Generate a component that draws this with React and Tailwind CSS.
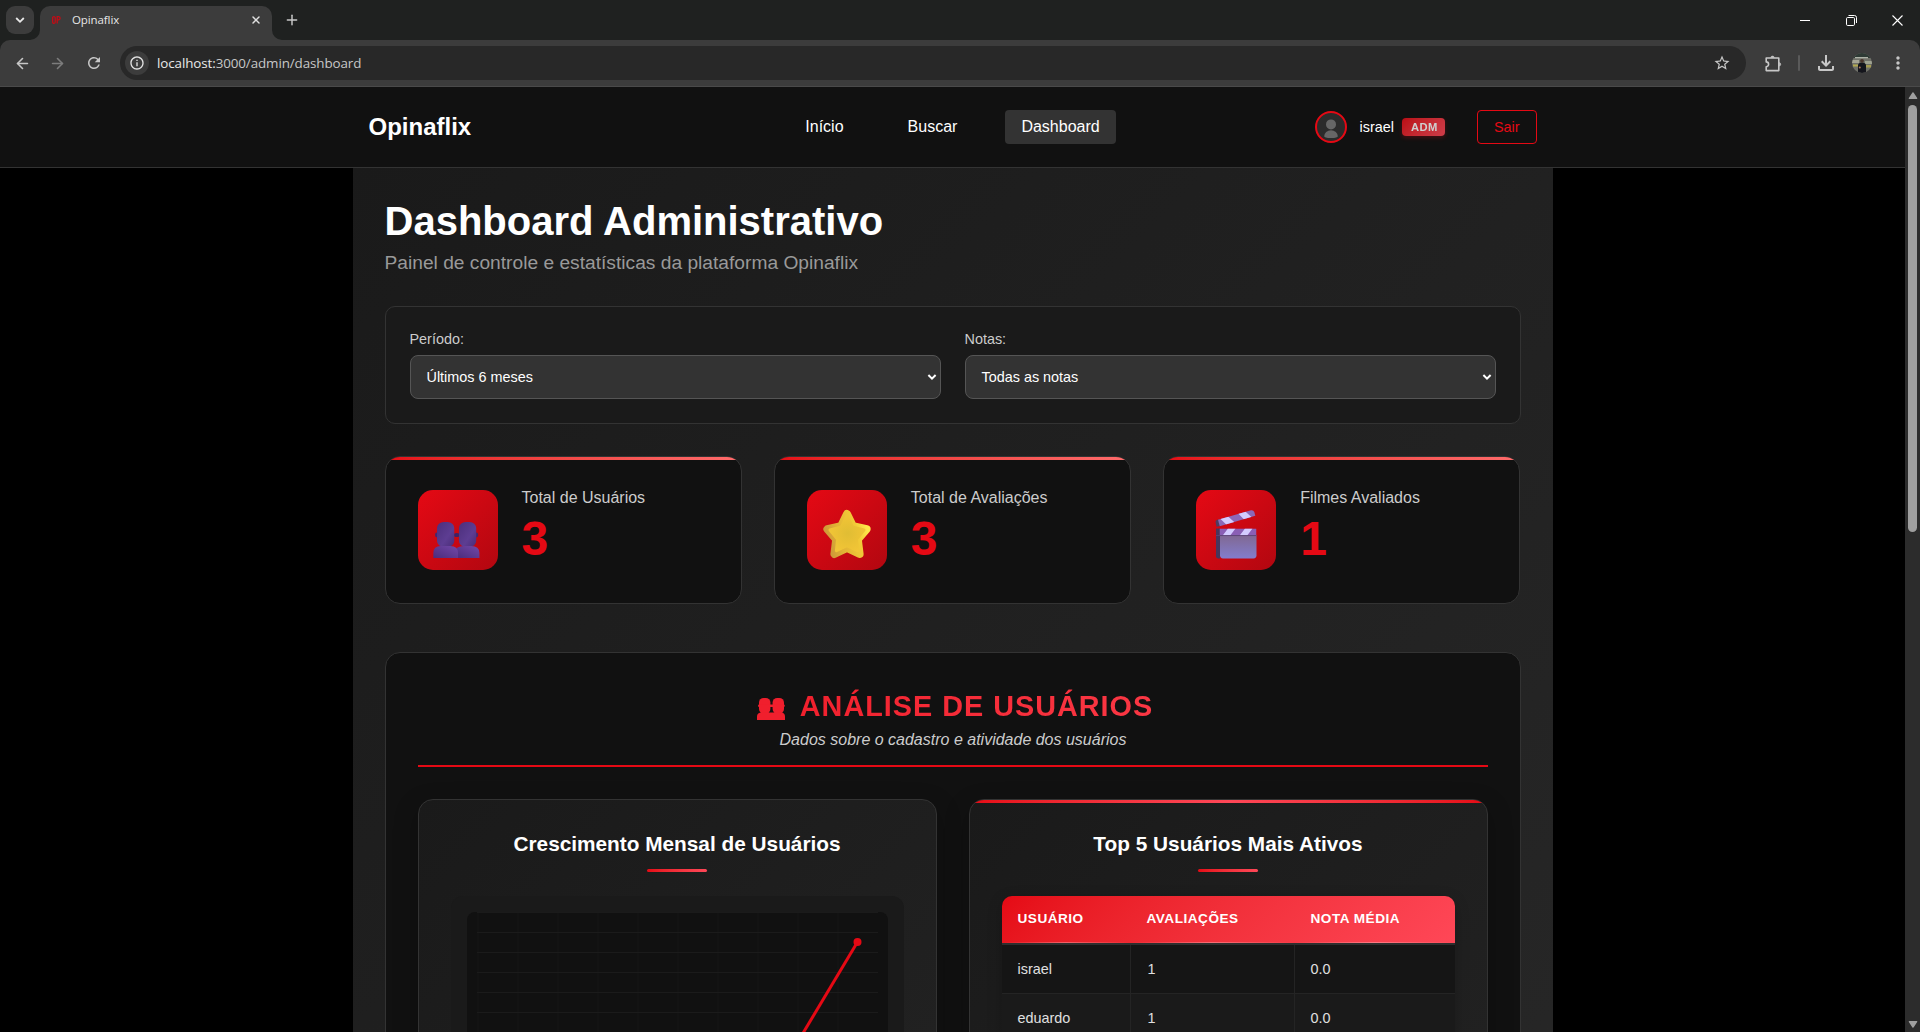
import React from "react";
import { ArrowLeft, ArrowRight, Plus, X } from "lucide-react";
import {
  MdRefresh,
  MdOutlineInfo,
  MdStarBorder,
  MdOutlineFileDownload,
  MdMoreVert,
} from "react-icons/md";

function BrowserTabs() {
  return (
    <div className="flex h-10 items-end bg-[#1f2120]">
      <div className="mb-1.5 ml-1.5 flex h-7 w-7 items-center justify-center rounded-[9px] bg-[#3c3c3c]">
        <svg width="10" height="10" viewBox="0 0 10 10" fill="none" stroke="#e8e8e8" strokeWidth="1.8">
          <path d="M1.2 3 L5 6.8 L8.8 3" />
        </svg>
      </div>
      <svg className="-ml-1" width="10" height="10" viewBox="0 0 10 10">
        <path d="M10 0 V10 H0 A10 10 0 0 0 10 0Z" fill="#3c3c3c" />
      </svg>
      <div className="flex h-[34px] w-[232px] items-center rounded-t-[10px] bg-[#3c3c3c] pb-1.5 pl-2.5">
        <svg width="12" height="12" viewBox="0 0 12 12" fill="none" stroke="#c20c16" strokeWidth="1.3">
          <rect x="2.6" y="2.6" width="2.6" height="6.8" rx="1.3" />
          <path d="M7.2 9.6 V2.6 H8.6 A1.5 1.6 0 0 1 8.6 5.8 H7.2" />
        </svg>
        <span className="ml-2.5 flex-1 font-['Open_Sans',sans-serif] text-[11.5px] leading-4 tracking-[-0.1px] text-[#e6e6e6]">
          Opinaflix
        </span>
        <X size={12} strokeWidth={2.9} color="#e0e0e0" className="mr-2.5" />
      </div>
      <svg width="10" height="10" viewBox="0 0 10 10">
        <path d="M0 0 V10 H10 A10 10 0 0 1 0 0Z" fill="#3c3c3c" />
      </svg>
      <Plus size={16} strokeWidth={2.2} color="#c8c8c8" className="mb-3 ml-[2px]" />
      <div className="flex-1" />
      <div className="flex h-10 items-center">
        <div className="flex w-[46px] justify-center">
          <div className="h-px w-2.5 bg-white" />
        </div>
        <div className="flex w-[46px] justify-center">
          <svg width="11" height="11" viewBox="0 0 11 11" fill="none" stroke="#fff" strokeWidth="1">
            <rect x="0.5" y="2.5" width="8" height="8" rx="1.2" />
            <path d="M2.5 0.5 H8.5 A2 2 0 0 1 10.5 2.5 V8" />
          </svg>
        </div>
        <div className="flex w-[46px] justify-center">
          <svg width="11" height="11" viewBox="0 0 11 11" fill="none" stroke="#fff" strokeWidth="1.1">
            <path d="M0.5 0.5 L10.5 10.5 M10.5 0.5 L0.5 10.5" />
          </svg>
        </div>
      </div>
    </div>
  );
}

function ProfilePhoto() {
  return (
    <svg width="20" height="20" viewBox="0 0 20 20">
      <defs>
        <clipPath id="photo">
          <circle cx="10" cy="10" r="10" />
        </clipPath>
      </defs>
      <g clipPath="url(#photo)">
        <rect width="20" height="20" fill="#6f7068" />
        <rect width="20" height="5" fill="#2e3a35" />
        <rect y="4" x="3" width="13" height="1.3" fill="#aeb3a8" />
        <rect y="7" width="7" height="3" fill="#a5a594" />
        <rect x="13" y="8" width="7" height="3" fill="#9fa291" />
        <rect x="1" y="11.5" width="5" height="2" fill="#b3a94f" />
        <rect x="14" y="12" width="5" height="2.5" fill="#a59b52" />
        <path d="M6 20 V12 Q6.5 9.5 10 9.5 T14 12 V20Z" fill="#14151c" />
        <circle cx="10" cy="7.8" r="1.9" fill="#4a352c" />
        <circle cx="7.8" cy="14.5" r="1" fill="#b07a5c" />
      </g>
    </svg>
  );
}

function BrowserToolbar() {
  return (
    <div className="bg-[#1f2120]">
      <div className="flex h-[47px] items-center rounded-t-[10px] border-b border-[#4a4a4a] bg-[#3c3c3c]">
        <ArrowLeft size={17} strokeWidth={2.3} color="#c7c7c7" className="ml-3.5" />
        <ArrowRight size={17} strokeWidth={2.3} color="#7c7c7c" className="ml-[18px]" />
        <MdRefresh size={18} color="#c7c7c7" className="ml-[19px]" />
        <div className="ml-[17px] flex h-[34px] w-[1626px] items-center rounded-full bg-[#282828] pl-[5px]">
          <div className="flex h-6 w-6 items-center justify-center rounded-full bg-[#3c3c3c]">
            <MdOutlineInfo size={16} color="#e3e3e3" />
          </div>
          <span className="ml-2 flex-1 font-['Open_Sans',sans-serif] text-[13.4px] leading-5 tracking-[-0.1px] text-[#c7c7c7]">
            <span className="text-[#e8e8e8]">localhost:</span>3000/admin/dashboard
          </span>
          <MdStarBorder size={18} color="#c7c7c7" className="mr-[15px]" />
        </div>
        <svg className="ml-[19px]" width="17" height="17" viewBox="0 0 17 17" fill="none" stroke="#c7c7c7" strokeWidth="1.6" strokeLinejoin="round">
          <path d="M1.2 3 H13.8 V15.6 H1.2 V11.7 A2.4 2.4 0 0 0 1.2 6.9Z" />
          <path d="M5.7 2.4 A1.9 1.9 0 0 1 9.3 2.4Z M14.4 7.5 A1.9 1.9 0 0 1 14.4 11.1Z" fill="#c7c7c7" strokeWidth="0.6" />
        </svg>
        <div className="ml-[16px] h-4 w-0.5 rounded bg-[#5a5a5a]" />
        <MdOutlineFileDownload size={24} color="#c7c7c7" className="ml-3.5" />
        <div className="ml-[14px]">
          <ProfilePhoto />
        </div>
        <MdMoreVert size={20} color="#c7c7c7" className="ml-[16px]" />
      </div>
    </div>
  );
}

function SiteHeader() {
  return (
    <header className="h-[81px] border-b border-[#333] bg-[#111]">
      <div className="mx-auto grid h-20 w-[1200px] grid-cols-[1fr_auto_1fr] items-center px-4">
        <div className="text-2xl leading-8 font-bold text-white">Opinaflix</div>
        <nav className="flex gap-8 text-base leading-[18px] text-white">
          <a className="px-4 py-2">Início</a>
          <a className="px-4 py-2">Buscar</a>
          <a className="rounded-[4px] bg-[#333] px-4 py-2">Dashboard</a>
        </nav>
        <div className="flex items-center justify-end">
          <svg width="32" height="32" viewBox="0 0 32 32">
            <circle cx="16" cy="16" r="15" fill="#2b2b2b" stroke="#e50914" strokeWidth="2" />
            <circle cx="16" cy="13.4" r="5" fill="#666" />
            <path d="M9.2 25.2 A6.8 6 0 0 1 22.8 25.2 Q22.8 27 16 27 T9.2 25.2Z" fill="#666" />
          </svg>
          <span className="ml-[13px] text-[14.4px] leading-4 text-white">israel</span>
          <span className="ml-2 flex h-[18px] w-[43px] items-center justify-center rounded-[4px] bg-linear-135 from-[#e50914] to-[#ff4757] pt-px pl-0.5 text-[11.2px] font-bold tracking-[0.5px] text-white opacity-80 shadow-[0_2px_4px_rgba(229,9,20,0.3)]">
            ADM
          </span>
          <button className="ml-8 rounded-[4px] border border-[#e50914] px-4 py-2 text-[14.4px] leading-4 text-[#e50914]">
            Sair
          </button>
        </div>
      </div>
    </header>
  );
}

function Filter({ label, value }) {
  return (
    <div className="flex flex-1 flex-col gap-2">
      <label className="text-[14.4px] leading-4 text-[#ccc]">{label}</label>
      <div className="flex h-11 items-center justify-between rounded-lg border border-[#555] bg-[#333] pr-[3px] pl-4 text-[14.4px] text-white">
        <span className="pt-px">{value}</span>
        <svg width="10" height="10" viewBox="0 0 10 10" fill="none" stroke="#fff" strokeWidth="2">
          <path d="M1.4 3 L5 6.6 L8.6 3" />
        </svg>
      </div>
    </div>
  );
}

function UsersIcon() {
  return (
    <svg className="mt-[3px] mr-[3px]" width="47" height="56" viewBox="0 0 42 56" preserveAspectRatio="none">
      <defs>
        <linearGradient id="headFill" x1="0" y1="0" x2="1" y2="1">
          <stop offset="0" stopColor="#4c2f7c" />
          <stop offset="0.6" stopColor="#5d3d92" />
          <stop offset="1" stopColor="#4a2c78" />
        </linearGradient>
        <linearGradient id="bodyFill" x1="0" y1="1" x2="1" y2="0">
          <stop offset="0" stopColor="#4b2c7c" />
          <stop offset="1" stopColor="#7248a8" />
        </linearGradient>
      </defs>
      <g>
        <ellipse cx="3.6" cy="31" rx="1.8" ry="2.4" fill="#44276e" />
        <ellipse cx="38.6" cy="31" rx="1.8" ry="2.4" fill="#44276e" />
        <ellipse cx="21.2" cy="31" rx="2.6" ry="2" fill="#3d2266" />
        <rect x="23.2" y="18" width="15.4" height="25" rx="6" fill="url(#headFill)" />
        <path d="M21 54 V44 Q24 42 28 42 H34 Q41.5 42 41.5 49 V54Z" fill="url(#bodyFill)" />
        <rect x="3.6" y="18" width="15.4" height="25" rx="6" fill="url(#headFill)" />
        <path d="M0.3 54 V49 Q0.3 42 7 42 H15.5 Q22.4 42 22.4 49 V54Z" fill="url(#bodyFill)" />
      </g>
    </svg>
  );
}

function StarIcon() {
  return (
    <svg className="mt-[3px]" width="50" height="56" viewBox="0 0 50 56">
      <defs>
        <radialGradient id="starFill" cx="0.52" cy="0.5" r="0.6">
          <stop offset="0" stopColor="#e0bd34" />
          <stop offset="0.6" stopColor="#ecc235" />
          <stop offset="1" stopColor="#f2c637" />
        </radialGradient>
        <linearGradient id="starEdge" x1="0" y1="0.6" x2="1" y2="0.3">
          <stop offset="0" stopColor="#cf9a38" />
          <stop offset="0.3" stopColor="#e2b335" />
          <stop offset="0.75" stopColor="#f2cb38" />
          <stop offset="1" stopColor="#ffe84a" />
        </linearGradient>
      </defs>
      <path
        d="M25 10 L31 22.2 L44.6 25.2 L35.8 35.4 L37.6 50 L25 43.8 L12.4 50 L14.2 35.4 L5.4 25.2 L19 22.2Z"
        fill="url(#starFill)"
        stroke="url(#starEdge)"
        strokeWidth="8"
        strokeLinejoin="round"
      />
      <path
        d="M25 12 L30.6 23 L42 26 L34.4 35.4 L35.6 46.6 L25 41.6 L14.4 46.6 L15.6 35.4 L8 26 L19.4 23Z"
        fill="url(#starFill)"
        stroke="url(#starFill)"
        strokeWidth="3"
        strokeLinejoin="round"
      />
    </svg>
  );
}

function ClapperIcon() {
  return (
    <svg className="mt-[3px]" width="42" height="58" viewBox="0 0 42 56" preserveAspectRatio="none">
      <defs>
        <linearGradient id="slate" x1="0" y1="0" x2="0" y2="1">
          <stop offset="0" stopColor="#806892" />
          <stop offset="1" stopColor="#837dcd" />
        </linearGradient>
        <clipPath id="upperArm">
          <path d="M3 16.2 L36 7 Q38.5 6.6 39.3 8.8 L40.3 12.3 L4.8 22.4Z" />
        </clipPath>
        <clipPath id="lowerArm">
          <rect x="4.5" y="24.6" width="37" height="7" />
        </clipPath>
      </defs>
      <path d="M0.5 18 Q0.5 16.2 3.5 15.6 L5.5 22.2 L1.5 22.9Z" fill="#4d3b60" />
      <g clipPath="url(#upperArm)">
        <rect width="42" height="26" fill="#8b68b8" />
        <path d="M4.5 14.5 L12 12 L20 19 L12.5 22Z M22.5 9.5 L29.5 7.5 L37.5 14.5 L30 17Z" fill="#d3cbff" />
      </g>
      <path d="M1 24.6 H5 V53.5 H3 Q1 53.5 1 51.5Z" fill="#47355c" />
      <path d="M5 31 H41.5 V50.5 Q41.5 53.5 38.5 53.5 H8 Q5 53.5 5 50.5Z" fill="url(#slate)" />
      <g clipPath="url(#lowerArm)">
        <rect x="4.5" y="24.6" width="37" height="7" fill="#8a5fb5" />
        <path d="M13 24.6 H20.5 L15 31.6 H7.5Z M30 24.6 H37.5 L32 31.6 H24.5Z" fill="#d3cbff" />
      </g>
      <rect x="1" y="31" width="40.5" height="0.9" fill="#5b4476" />
    </svg>
  );
}

function StatCard({ icon, title, value }) {
  return (
    <div className="h-[148px] flex-1 overflow-hidden rounded-[15px] border border-[#333] bg-[#111]">
      <div className="h-[3px] bg-linear-to-r from-[#e50914] to-[#ff6b6b]" />
      <div className="flex items-center gap-6 px-8 pt-[30px]">
        <div className="flex h-20 w-20 items-center justify-center rounded-[15px] bg-linear-135 from-[#e50914] to-[#b20710]">
          {icon}
        </div>
        <div className="flex h-20 flex-col">
          <h3 className="-mt-px text-base leading-[18px] text-[#ccc]">{title}</h3>
          <p className="mt-[7px] text-[48px] leading-[50px] font-bold text-[#e50914]">{value}</p>
        </div>
      </div>
    </div>
  );
}

function PanelTitle({ children }) {
  return (
    <div className="flex flex-col items-center">
      <h3 className="text-[20.8px] leading-6 font-bold text-white">{children}</h3>
      <div className="mt-[13px] h-[3px] w-[60px] rounded-[2px] bg-linear-to-r from-[#e50914] to-[#ff4757]" />
    </div>
  );
}

const verticals = [0, 40, 80, 120, 160, 200, 240, 280, 320, 360];
const horizontals = [0, 20, 40, 60, 80, 100, 120, 140, 160, 180];

function GrowthChart() {
  return (
    <div className="mt-6 h-[400px] rounded-xl bg-[#1a1a1a] p-4">
      <svg className="h-[300px] w-full rounded-lg bg-[#111]" viewBox="0 0 421 300">
        <g stroke="#171717">
          {verticals.map((x) => (
            <line key={x} x1={x + 11} x2={x + 11} y1="0" y2="300" />
          ))}
        </g>
        <g stroke="#1b1b1b">
          {horizontals.map((y) => (
            <line key={y} x1="10" x2="411" y1={y + 0.5} y2={y + 0.5} />
          ))}
        </g>
        <path d="M280.5 214 L390.5 30" stroke="#e50914" strokeWidth="3" />
        <circle cx="390.5" cy="30" r="4" fill="#e50914" />
      </svg>
    </div>
  );
}

const rows = [
  ["israel", "1", "0.0"],
  ["eduardo", "1", "0.0"],
];

function UsersTable() {
  return (
    <div className="mt-6 overflow-hidden rounded-t-[10px] shadow-[0_4px_15px_rgba(0,0,0,0.2)]">
      <div className="bg-linear-135 from-[#e50914] to-[#ff4757]">
        <div className="grid h-[46px] grid-cols-[128px_164px_1fr] items-center pt-px text-[13.6px] font-bold tracking-[0.5px] text-white">
          <span className="pl-4">USUÁRIO</span>
          <span className="pl-[17px]">AVALIAÇÕES</span>
          <span className="pl-[17px]">NOTA MÉDIA</span>
        </div>
        <div className="grid h-px grid-cols-[128px_164px_1fr]">
          <div className="bg-linear-to-r from-transparent via-white/30 to-transparent" />
          <div className="bg-linear-to-r from-transparent via-white/30 to-transparent" />
          <div className="bg-linear-to-r from-transparent via-white/30 to-transparent" />
        </div>
      </div>
      <div className="h-0.5 bg-[#2e2e2e]" />
      {rows.map(([name, reviews, average], index) => (
        <div
          key={name}
          className={
            "grid h-[49px] grid-cols-[129px_164px_1fr] border-b border-[#242424] text-[14.4px] leading-[48px] text-[#e0e0e0] " +
            (index % 2 === 0 ? "bg-[#151515]" : "bg-[#1a1a1a]")
          }
        >
          <span className="border-r border-[#242424] pl-4">{name}</span>
          <span className="border-r border-[#242424] pl-[17px]">{reviews}</span>
          <span className="pl-4">{average}</span>
        </div>
      ))}
    </div>
  );
}

function GroupGlyph() {
  return (
    <svg className="mt-1.5" width="30" height="24" viewBox="0 0 30 24" fill="#f01f2d">
      <rect x="3" y="1" width="11.4" height="15.5" rx="4.6" />
      <rect x="16.6" y="1" width="11.4" height="15.5" rx="4.6" />
      <rect x="2" y="7.4" width="26.8" height="2.6" rx="1.3" />
      <path d="M1 23 V19.5 Q1 15.5 6 15.5 H24.5 Q29 15.5 29 19.5 V23Z" />
    </svg>
  );
}

function UserAnalysis() {
  return (
    <section className="mt-12 h-[700px] rounded-[15px] border border-[#333] bg-[#111] px-8 pt-8">
      <div className="flex h-[82px] flex-col items-center border-b-2 border-[#e50914]">
        <div className="mt-[3px] flex items-center pl-1">
          <GroupGlyph />
          <h2 className="ml-3.5 bg-linear-to-r from-[#f1202d] to-[#fb3744] bg-clip-text text-[28.8px] leading-9 font-bold tracking-[1px] text-transparent">
            ANÁLISE DE USUÁRIOS
          </h2>
        </div>
        <p className="mt-[7px] pl-px text-base leading-[18px] text-[#ccc] italic">
          Dados sobre o cadastro e atividade dos usuários
        </p>
      </div>
      <div className="mt-8 grid grid-cols-2 gap-8">
        <div className="h-[560px] rounded-[15px] border border-[#333] bg-linear-135 from-[#1a1a1a] to-[#242424] px-8 pt-8 shadow-[0_8px_25px_rgba(0,0,0,0.25)]">
          <PanelTitle>Crescimento Mensal de Usuários</PanelTitle>
          <GrowthChart />
        </div>
        <div className="h-[560px] overflow-hidden rounded-[15px] border border-[#333] bg-linear-135 from-[#1a1a1a] to-[#242424] shadow-[0_8px_25px_rgba(0,0,0,0.25)]">
          <div className="h-[3px] bg-linear-to-r from-[#e50914] via-[#ff4757] to-[#e50914]" />
          <div className="px-8 pt-[29px]">
            <PanelTitle>Top 5 Usuários Mais Ativos</PanelTitle>
            <UsersTable />
          </div>
        </div>
      </div>
    </section>
  );
}

function Dashboard() {
  return (
    <main className="mx-auto h-[2000px] w-[1200px] bg-linear-135 from-[#1a1a1a] to-[#2d2d2d] px-8 pt-[30px]">
      <h1 className="text-[40px] leading-[46px] font-bold text-white">Dashboard Administrativo</h1>
      <p className="mt-2 text-[19.2px] leading-[22px] text-[#999]">
        Painel de controle e estatísticas da plataforma Opinaflix
      </p>
      <div className="mt-8 flex h-[118px] gap-6 rounded-[10px] border border-[#333] bg-[#1a1a1a] px-6 pt-6">
        <Filter label="Período:" value="Últimos 6 meses" />
        <Filter label="Notas:" value="Todas as notas" />
      </div>
      <div className="mt-8 flex gap-8">
        <StatCard icon={<UsersIcon />} title="Total de Usuários" value="3" />
        <StatCard icon={<StarIcon />} title="Total de Avaliações" value="3" />
        <StatCard icon={<ClapperIcon />} title="Filmes Avaliados" value="1" />
      </div>
      <UserAnalysis />
    </main>
  );
}

function Scrollbar() {
  return (
    <div className="flex w-[15px] shrink-0 flex-col items-center bg-[#2c2c2c] pt-1 pb-[3px]">
      <svg width="10" height="10" viewBox="0 0 10 10">
        <path d="M5 2 L8.6 7.4 H1.4Z" fill="#9f9f9f" stroke="#9f9f9f" strokeWidth="1.4" strokeLinejoin="round" />
      </svg>
      <div className="mt-1 h-[427px] w-[9px] rounded-full bg-[#9f9f9f]" />
      <div className="flex-1" />
      <svg width="10" height="10" viewBox="0 0 10 10">
        <path d="M5 8 L8.6 2.6 H1.4Z" fill="#9f9f9f" stroke="#9f9f9f" strokeWidth="1.4" strokeLinejoin="round" />
      </svg>
    </div>
  );
}

export default function App() {
  return (
    <div className="flex h-[1032px] w-[1920px] flex-col overflow-hidden bg-black font-['Liberation_Sans',Arial,sans-serif]">
      <BrowserTabs />
      <BrowserToolbar />
      <div className="flex min-h-0 flex-1">
        <div className="min-w-0 flex-1 overflow-hidden">
          <SiteHeader />
          <Dashboard />
        </div>
        <Scrollbar />
      </div>
    </div>
  );
}
